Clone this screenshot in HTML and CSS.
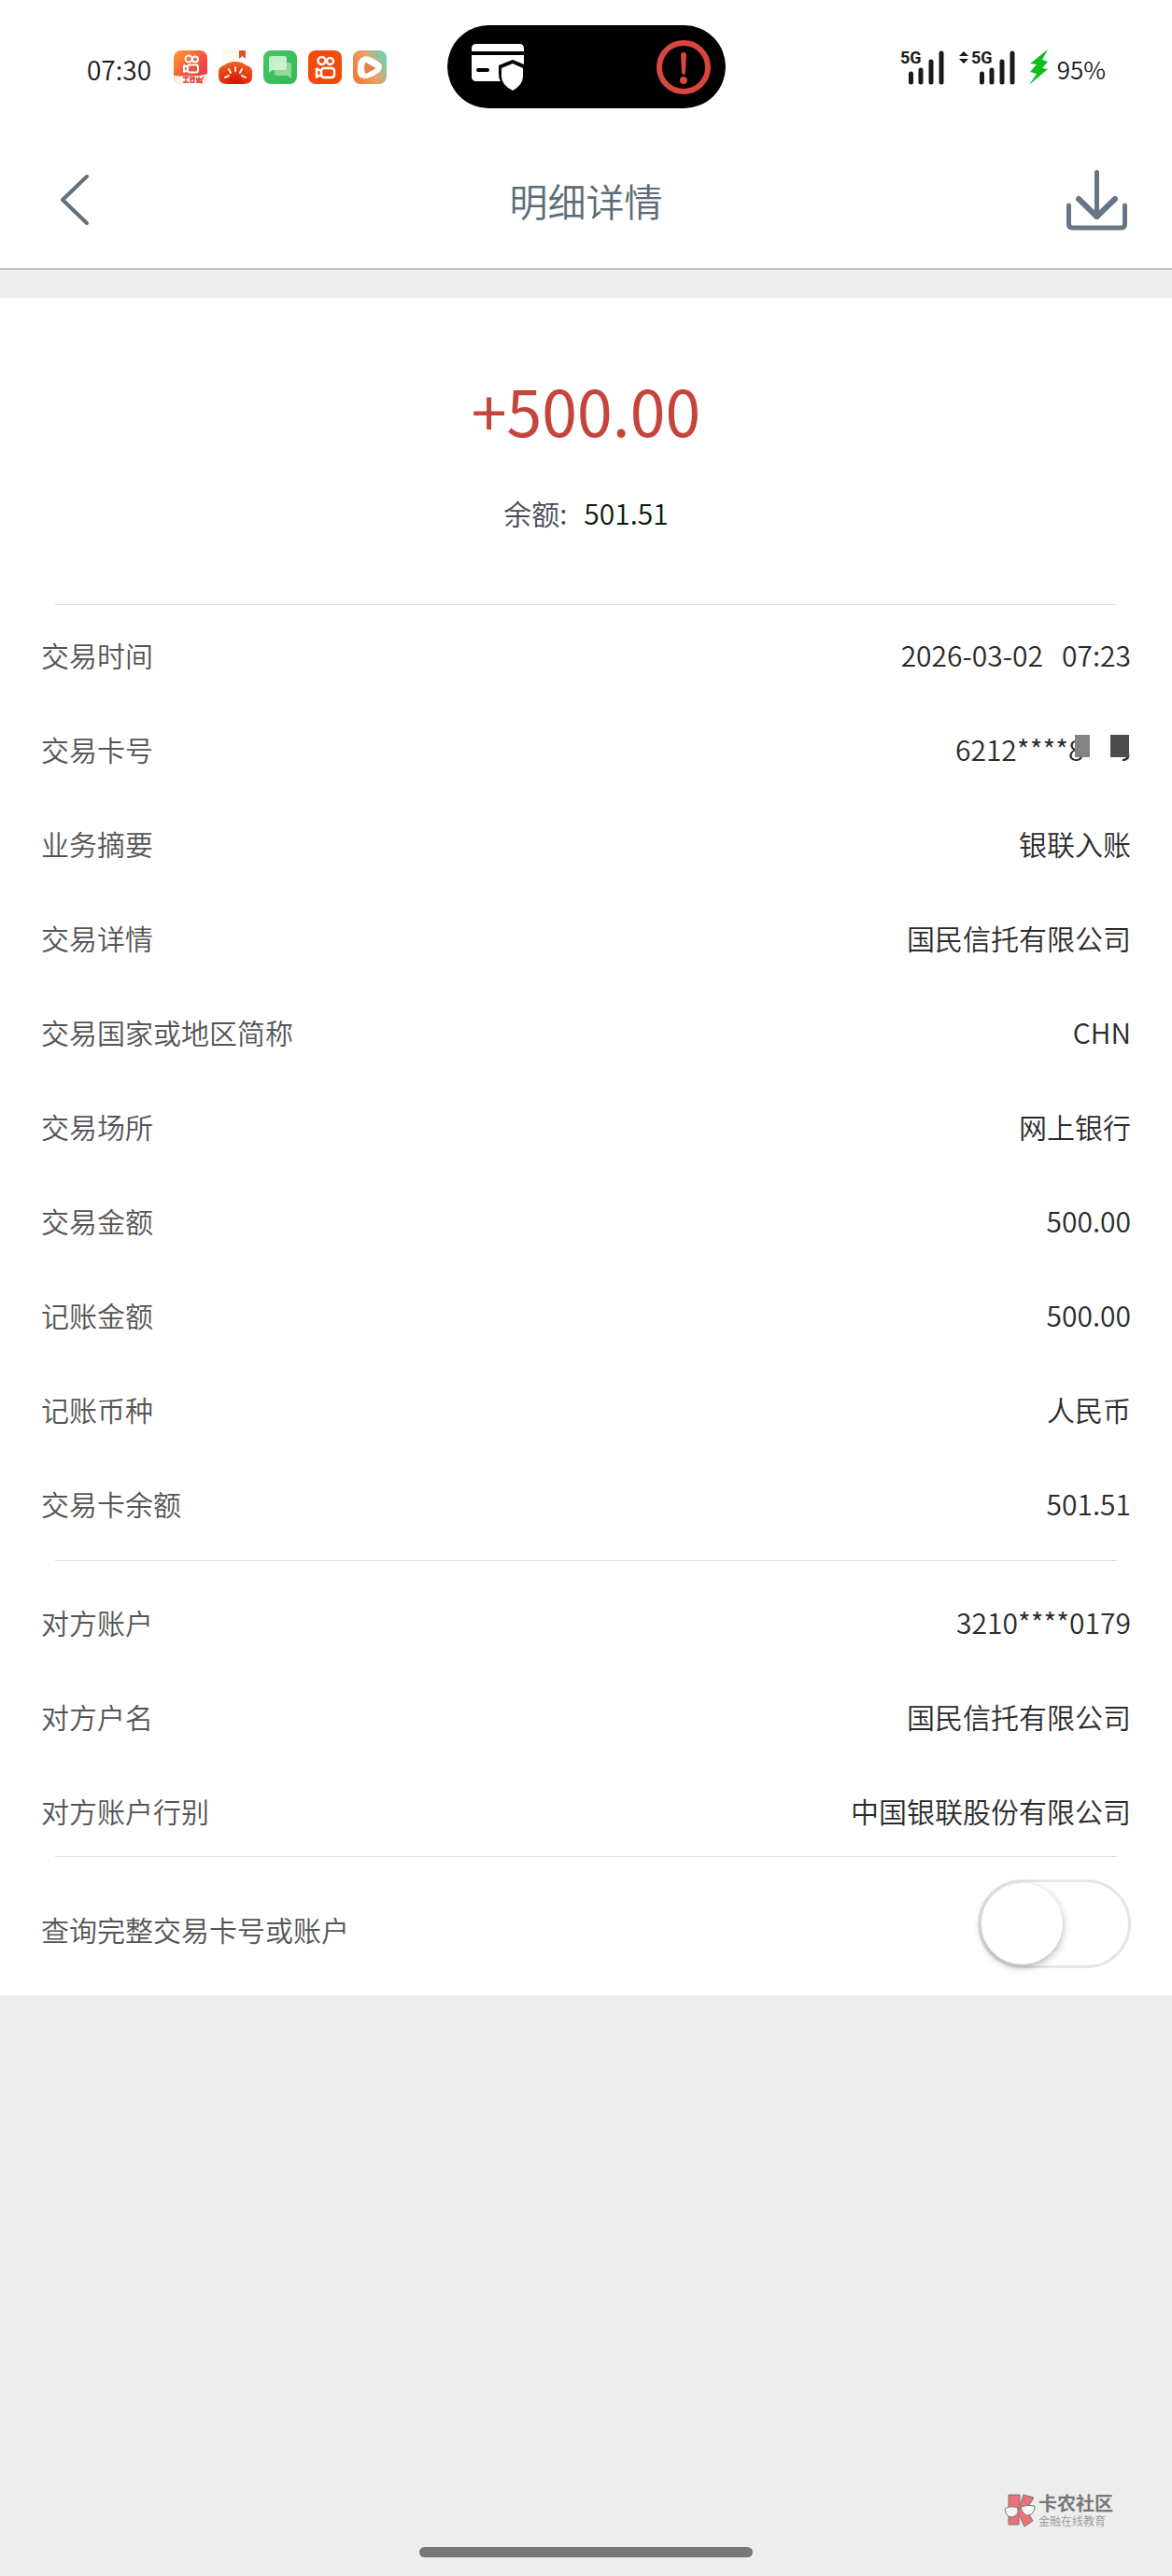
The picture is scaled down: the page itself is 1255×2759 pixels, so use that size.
FILE: index.html
```html
<!DOCTYPE html>
<html lang="zh-CN">
<head>
    <meta charset="UTF-8">
    <meta name="viewport" content="width=device-width, initial-scale=1.0">
    <title>明细详情</title>
    <link rel="stylesheet" href="styles.css">
</head>
<body>

<!-- Status Bar -->
<div class="status-bar">
    <div class="status-left">
        <span class="time">07:30</span>
        <div class="app-icons">
            <svg width="36" height="36" viewBox="0 0 36 36">
                <defs>
                    <linearGradient id="lite" x1="0" y1="0" x2="1" y2="1">
                        <stop offset="0" stop-color="#ff9d2e"/>
                        <stop offset="0.5" stop-color="#f4573c"/>
                        <stop offset="1" stop-color="#e92a4d"/>
                    </linearGradient>
                </defs>
                <rect width="36" height="36" rx="8" fill="url(#lite)"/>
                <g fill="none" stroke="#fff" stroke-width="2">
                    <circle cx="16" cy="9" r="3.5"/>
                    <circle cx="23" cy="9.500" r="3"/>
                    <rect x="15" y="15.500" width="11" height="8" rx="2"/>
                    <path d="M15 18l-4-2v7l4-2" stroke-linejoin="round"/>
                </g>
                <path d="M0 27q14 1 28 0l8-2v3q0 8-8 8H8q-7 0-8-9z" fill="#fff4e8"/>
                <path d="M10 29h6M13 28v6M10 34h6M18 29h4v5h-4zM18 31h4M24 29l2 5M27 28v6M24 31h6M24 34h7M32 28l-4 7" fill="none" stroke="#d93a37" stroke-width="1.300"/>
            </svg>
            <svg width="36" height="36" viewBox="0 0 36 36">
                <defs>
                    <radialGradient id="tomato" cx="0.5" cy="0.9" r="0.8">
                        <stop offset="0" stop-color="#d80f05"/>
                        <stop offset="1" stop-color="#f15a1f"/>
                    </radialGradient>
                </defs>
                <path d="M4 3q0-3 3-3h15v16H4z" fill="#fffaeb"/>
                <path d="M22 0h7v9l-3.500-3L22 9z" fill="#d95422"/>
                <path d="M0 22q1-5 6-6 5-4 12-4t12 4q5 1 6 6v6q0 8-9 8H9q-9 0-9-8z" fill="url(#tomato)"/>
                <path d="M18 18v4M11 20l2 4M25 20l-2 4M7 29l4-2M29 29l-4-2" stroke="#fff1cf" stroke-width="2" stroke-linecap="round"/>
            </svg>
            <svg width="36" height="36" viewBox="0 0 36 36">
                <defs>
                    <linearGradient id="chat" x1="0" y1="0" x2="1" y2="1">
                        <stop offset="0" stop-color="#47c665"/>
                        <stop offset="1" stop-color="#35b957"/>
                    </linearGradient>
                </defs>
                <rect width="36" height="36" rx="8" fill="url(#chat)"/>
                <path d="M14 13h14q2 0 2 2v15l-4-3H14q-2 0-2-2V15q0-2 2-2z" fill="#8ddb9b"/>
                <path d="M9 6h13q3 0 3 3v9q0 3-3 3H10l-4 3V9q0-3 3-3z" fill="#d3f3d5" fill-opacity="0.9"/>
            </svg>
            <svg width="36" height="36" viewBox="0 0 36 36">
                <rect width="36" height="36" rx="8" fill="#f34a0b"/>
                <g fill="none" stroke="#fff" stroke-width="2.500">
                    <circle cx="14.500" cy="11" r="4"/>
                    <circle cx="23.500" cy="11.500" r="3.5"/>
                    <rect x="14" y="19" width="14" height="10" rx="3"/>
                    <path d="M14 22l-5-2.500v9l5-2.500" stroke-linejoin="round"/>
                </g>
            </svg>
            <svg width="36" height="36" viewBox="0 0 36 36">
                <defs>
                    <linearGradient id="video" x1="0" y1="0.7" x2="1" y2="0.2">
                        <stop offset="0" stop-color="#f27b3a"/>
                        <stop offset="0.5" stop-color="#eba066"/>
                        <stop offset="1" stop-color="#63d6b9"/>
                    </linearGradient>
                </defs>
                <rect width="36" height="36" rx="8" fill="url(#video)"/>
                <path d="M9 8q5-4 13 1 10 5 9 9 0 5-9 9-9 5-14 2-4-3-3-11 0-8 4-10z" fill="#fff"/>
                <path d="M14 14l9 5-9 5q-2-5 0-10z" fill="#e3824d" stroke="#e3824d" stroke-width="2" stroke-linejoin="round"/>
            </svg>
        </div>
    </div>

    <div class="island">
        <svg width="56" height="50" viewBox="0 0 56 50">
            <path d="M5 0h46q5 0 5 5v3H0V5q0-5 5-5zM0 12h56v10l-12-5-15 6v9q0 5 2 8H5q-5 0-5-5z" fill="#fff"/>
            <path d="M7 28h10" stroke="#000" stroke-width="4" stroke-linecap="round"/>
            <path d="M44 21l11 5v9q0 9-11 15-12-6-12-15v-9z" fill="#fff"/>
        </svg>
        <svg width="58" height="58" viewBox="0 0 58 58">
            <circle cx="29" cy="29" r="26" fill="none" stroke="#d9453f" stroke-width="6"/>
            <path d="M26 16q0-3 3-3t3 3l-1 18q0 3-2 3t-2-3z" fill="#d9453f"/>
            <circle cx="29" cy="43" r="4" fill="#d9453f"/>
        </svg>
    </div>

    <div class="status-right">
        <svg width="48" height="46" viewBox="0 -5 48 46">
            <text class="network" x="0" y="14">5G</text>
            <path d="M11.500 25v9M22 21v13M33 12v22M44 3v31" stroke="#1a1a1a" stroke-width="5" stroke-linecap="round"/>
        </svg>
        <svg width="60" height="46" viewBox="0 -5 60 46">
            <path d="M0 6l5-5 5 5zM0 9h10l-5 5z" fill="#1a1a1a"/>
            <text class="network" x="13" y="14">5G</text>
            <path d="M24.500 25v9M35 21v13M46 12v22M57 3v31" stroke="#1a1a1a" stroke-width="5" stroke-linecap="round"/>
        </svg>
        <svg width="21" height="38" viewBox="0 0 21 38">
            <path d="M20 0L1 15l7 1-7 8 7 2-8 12 20-17-6-1 6-7-6-2z" fill="#0bbf1c"/>
        </svg>
        <span class="battery">95%</span>
    </div>
</div>

<!-- Header -->
<header class="header">
    <button type="button" class="icon-button back" aria-label="返回">
        <svg width="32" height="56" viewBox="0 0 32 56">
            <path d="M29 3L3 28l26 25" fill="none" stroke="#60727f" stroke-width="4" stroke-linecap="round" stroke-linejoin="round"/>
        </svg>
    </button>
    <h1>明细详情</h1>
    <button type="button" class="icon-button" aria-label="下载">
        <svg width="65" height="65" viewBox="0 0 65 65">
            <g fill="none" stroke="#657786" stroke-linecap="round" stroke-linejoin="round">
                <path d="M32.500 2.500v48" stroke-width="5"/>
                <path d="M13 31l19.500 19L52 31" stroke-width="6"/>
                <path d="M2.500 38v20q0 4 4 4h52q4 0 4-4V38" stroke-width="5"/>
            </g>
        </svg>
    </button>
</header>

<!-- Transaction Detail -->
<main class="panel">
    <section class="summary">
        <p class="amount">+500.00</p>
        <p class="balance"><span>余额:</span><strong>501.51</strong></p>
    </section>

    <dl class="details">
        <div class="row"><dt>交易时间</dt><dd>2026-03-02&nbsp;&nbsp; 07:23</dd></div>
        <div class="row"><dt>交易卡号</dt><dd>6212****8<span class="mask"></span>3</dd></div>
        <div class="row"><dt>业务摘要</dt><dd>银联入账</dd></div>
        <div class="row"><dt>交易详情</dt><dd>国民信托有限公司</dd></div>
        <div class="row"><dt>交易国家或地区简称</dt><dd>CHN</dd></div>
        <div class="row"><dt>交易场所</dt><dd>网上银行</dd></div>
        <div class="row"><dt>交易金额</dt><dd>500.00</dd></div>
        <div class="row"><dt>记账金额</dt><dd>500.00</dd></div>
        <div class="row"><dt>记账币种</dt><dd>人民币</dd></div>
        <div class="row"><dt>交易卡余额</dt><dd>501.51</dd></div>
    </dl>

    <dl class="details counterparty">
        <div class="row"><dt>对方账户</dt><dd>3210****0179</dd></div>
        <div class="row"><dt>对方户名</dt><dd>国民信托有限公司</dd></div>
        <div class="row"><dt>对方账户行别</dt><dd>中国银联股份有限公司</dd></div>
    </dl>

    <div class="switch-row">
        <label for="showFull">查询完整交易卡号或账户</label>
        <input type="checkbox" id="showFull" class="switch">
    </div>
</main>

<!-- Footer -->
<footer class="footer">
    <div class="brand">
        <svg width="34" height="36" viewBox="0 0 34 36">
            <g stroke="#777" stroke-width="1">
                <path d="M5 1h12v12l4-12 11 3-8 13 7 12-9 6-6-13v11H5z" fill="#ed6f78"/>
                <path d="M1 16q6-4 14-1 1 8-6 10-7 0-8-9zM18 14q7-3 15-1 0 9-7 10-6 0-8-9z" fill="#f6f6f6"/>
                <path d="M14 16l4-1" fill="none"/>
            </g>
        </svg>
        <div class="brand-text">
            <span class="brand-name">卡农社区</span>
            <span class="brand-slogan">金融在线教育</span>
        </div>
    </div>
    <div class="home-bar"></div>
</footer>

</body>
</html>
```
FILE: styles.css
```css
* {
    box-sizing: border-box;
}

body {
    font-family: "Noto Sans CJK SC", "Noto Sans", sans-serif;
    font-size: 30px;
    font-weight: 350;
    margin: 0;
    min-height: 100vh;
    display: flex;
    flex-direction: column;
    color: #333;
    background-color: #ededed;
}

svg {
    display: block;
    flex-shrink: 0;
}

/* Status Bar */
.status-bar {
    display: grid;
    grid-template-columns: 1fr auto 1fr;
    align-items: center;
    padding: 27px 71px 31px;
    background: #fff;
    color: #1a1a1a;
}

.status-left,
.status-right,
.app-icons {
    display: flex;
    align-items: center;
}

.status-left {
    gap: 24px;
    padding-left: 22px;
}

.time {
    font-size: 28px;
    padding-top: 4px;
}

.app-icons {
    gap: 12px;
}

.island {
    display: flex;
    align-items: center;
    justify-content: space-between;
    width: 298px;
    height: 89px;
    padding: 0 16px 0 26px;
    border-radius: 45px;
    background: #000;
}

.status-right {
    justify-content: flex-end;
    gap: 15px;
}

.network {
    font-family: Roboto, sans-serif;
    font-size: 18px;
    font-weight: bold;
    fill: #1a1a1a;
}

.battery {
    font-size: 26px;
    padding-top: 4px;
    margin-left: -6px;
}

/* Header */
.header {
    display: flex;
    align-items: center;
    justify-content: space-between;
    height: 142px;
    padding: 0 48px 6px;
    border-bottom: 2px solid #bcc5c8;
    background: #fff;
}

.header h1 {
    margin: 0;
    font-size: 41px;
    font-weight: 350;
    color: #5b6b77;
}

.icon-button {
    display: flex;
    align-items: center;
    height: 65px;
    padding: 0;
    border: none;
    background: none;
    cursor: pointer;
}

.back {
    padding: 0 17px 0 16px;
}

/* Panel */
.panel {
    margin-top: 30px;
    background: #fff;
}

.summary {
    padding: 70px 0 75px;
    text-align: center;
}

.summary p {
    margin: 0;
}

.amount {
    font-size: 68px;
    font-weight: 400;
    line-height: 100px;
    color: #c5443b;
}

.balance {
    display: flex;
    justify-content: center;
    gap: 18px;
    line-height: 46px;
    padding-top: 37px;
}

.balance span {
    color: #4a4a55;
}

.balance strong {
    font-weight: 350;
    color: #06200b;
}

.details,
.switch-row {
    position: relative;
    margin: 0;
    padding: 12px 44px 18px;
}

/* Divider above each group, inset from the text */
.details::before,
.switch-row::before {
    content: "";
    position: absolute;
    top: 0;
    left: 59px;
    right: 59px;
    height: 1px;
    background: #dedede;
}

.details {
    display: flex;
    flex-direction: column;
    gap: 16px;
}

.counterparty {
    padding-top: 24px;
    padding-bottom: 6px;
}

.row {
    display: flex;
    align-items: center;
    justify-content: space-between;
    line-height: 85px;
}

.row dt,
.switch-row label {
    color: #555;
}

.row dd {
    margin: 0;
    color: #2b2b2b;
}

/* Hidden card digits */
.mask {
    position: relative;
    display: inline-block;
    width: 34px;
    height: 24px;
}

.mask::before,
.mask::after {
    content: "";
    position: absolute;
    top: -4px;
    left: -10px;
    width: 16px;
    height: 24px;
    background: #838383;
}

.mask::after {
    left: 28px;
    width: 20px;
    background: #4c4c4c;
    box-shadow: -7px 8px 0 #fff;
}

.switch-row {
    display: flex;
    align-items: flex-start;
    justify-content: space-between;
    padding-top: 25px;
}

.switch-row label {
    line-height: 106px;
}

.switch {
    appearance: none;
    width: 164px;
    height: 95px;
    margin: 0;
    padding: 1px;
    border: 3px solid #e6e6e6;
    border-radius: 48px;
    background: #fff;
    cursor: pointer;
}

.switch::before {
    content: "";
    display: block;
    width: 87px;
    height: 87px;
    border-radius: 50%;
    background: #fff;
    box-shadow: 0 3px 8px rgba(0, 0, 0, 0.3);
}

.switch:checked::before {
    margin-left: auto;
}

/* Footer */
.footer {
    margin-top: auto;
    padding-bottom: 20px;
}

.brand {
    display: flex;
    align-items: center;
    justify-content: flex-end;
    gap: 3px;
    padding: 0 63px 20px 0;
}

.brand-text {
    display: flex;
    flex-direction: column;
    color: #777;
}

.brand-name {
    font-size: 20px;
    font-weight: bold;
    line-height: 22px;
}

.brand-slogan {
    font-size: 12px;
    line-height: 16px;
    color: #999;
}

.home-bar {
    width: 357px;
    height: 11px;
    margin: 0 auto;
    border-radius: 6px;
    background: #777;
}
```
